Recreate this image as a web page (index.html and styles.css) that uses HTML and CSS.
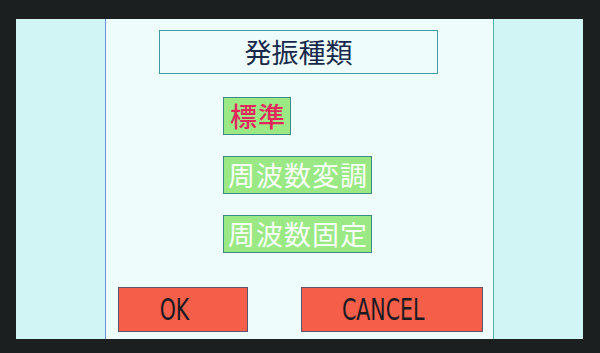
FILE: index.html
```html
<!DOCTYPE html>
<html lang="ja">

<head>
    <meta charset="UTF-8">
    <meta name="viewport" content="width=device-width, initial-scale=1.0">
    <title>発振種類</title>
    <link rel="stylesheet" href="styles.css">
</head>

<body>
    <section class="screen">
        <div class="side side-left"></div>

        <div class="panel">
            <div class="title">発振種類</div>

            <div class="options">
                <div class="option selected">標準</div>
                <div class="option">周波数変調</div>
                <div class="option">周波数固定</div>
            </div>

            <div class="actions">
                <div class="action ok"><span>OK</span></div>
                <div class="action cancel"><span>CANCEL</span></div>
            </div>
        </div>

        <div class="side side-right"></div>
    </section>
</body>

</html>
```

FILE: styles.css
```css
body {
    margin: 0;
    width: 600px;
    height: 353px;
    background-color: #1c1f20;
    overflow: hidden;
}

.screen {
    display: grid;
    grid-template-columns: 90px 387px 90px;
    width: 567px;
    height: 320px;
    margin: 19px 0 0 16px;
}

.side {
    background-color: #d1f5f4;
}

.side-left {
    border-right: 1px solid #6b93d6;
}

.side-right {
    border-left: 1px solid #4fb3b0;
}

.panel {
    display: flex;
    flex-direction: column;
    background-color: #eefcfb;
    font-family: "Noto Sans CJK JP", sans-serif;
}

.title {
    width: 277px;
    height: 42px;
    margin: 11px 0 0 53px;
    border: 1px solid #3e9aa3;
    color: #17294a;
    font-size: 27px;
    line-height: 42px;
    text-align: center;
}

.options {
    display: flex;
    flex-direction: column;
    align-items: flex-start;
    gap: 21px;
    margin: 23px 0 0 117px;
}

.option {
    height: 36px;
    padding: 0 3px 0 4px;
    border: 1px solid #3f8a86;
    background-color: #9ae985;
    color: #fbfffb;
    font-size: 27px;
    line-height: 36px;
    letter-spacing: 1px;
}

.option.selected {
    padding: 0 4px 0 6px;
    color: #e3275d;
    font-weight: 500;
}

.actions {
    display: flex;
    justify-content: space-between;
    margin: auto 10px 7px 12px;
}

.action {
    display: flex;
    align-items: center;
    justify-content: center;
    box-sizing: border-box;
    height: 45px;
    padding-right: 17px;
    border: 1px solid #5b5570;
    background-color: #f55e48;
    color: #1a1a22;
    font-family: "DejaVu Sans Condensed", "DejaVu Sans", sans-serif;
    font-size: 30px;
}

.action span {
    display: inline-block;
    transform: scaleX(0.76);
}

.ok {
    width: 130px;
}

.cancel {
    width: 182px;
}
```
